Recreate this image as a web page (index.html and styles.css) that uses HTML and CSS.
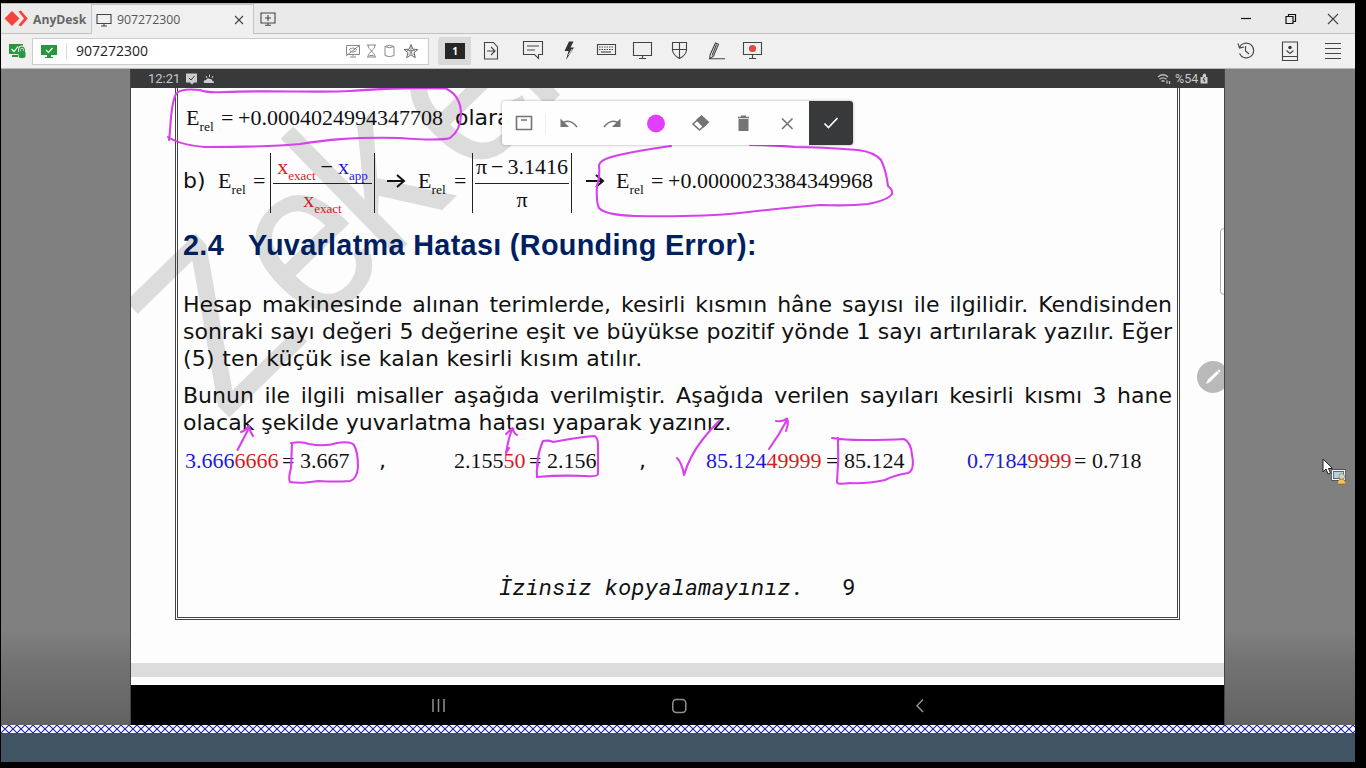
FILE: index.html
```html
<!DOCTYPE html>
<html lang="tr">
<head>
<meta charset="utf-8">
<title>AnyDesk</title>
<link rel="stylesheet" href="styles.css">
</head>
<body>
<div class="window">
  <header class="tabs">
    <div class="brand">
      <svg width="25" height="18" viewBox="0 0 25 18"><path d="M8 1l7.500 7.500L8 16 .5 8.500z" fill="#f4433a"/><path d="M14.500 1.500l2.300-1 7 8-7 8-2.300-1.500 5.500-6.500z" fill="#f4433a"/></svg>
      <b>AnyDesk</b>
    </div>
    <div class="tab">
      <svg width="16" height="14" viewBox="0 0 16 14"><path d="M1 1.500h14v9H1zM8 10.500v2.500M5 13h6" class="ln"/></svg>
      <span>907272300</span>
      <svg class="tabx" width="10" height="10" viewBox="0 0 10 10"><path d="M1 1l8 8M9 1l-8 8" class="ln"/></svg>
    </div>
    <svg class="newtab" width="16" height="14" viewBox="0 0 16 14"><path d="M1 1h14v10H1zM8 11v2M5 13.300h6M8 3v6M5 6h6" class="ln"/></svg>
    <div class="winbtns">
      <svg width="10" height="12" viewBox="0 0 10 12"><path d="M0 5.500h10" class="dk"/></svg>
      <svg width="12" height="12" viewBox="0 0 12 12"><path d="M1 3.500h7v7H1zM3.500 3.500v-2h7v7H8" class="dk"/></svg>
      <svg width="12" height="12" viewBox="0 0 12 12"><path d="M1 1l10 10M11 1L1 11" class="ln"/></svg>
    </div>
  </header>
  <div class="toolbar">
    <svg class="secure" width="18" height="16" viewBox="0 0 18 16"><path d="M0 1h14v10H0zM3 12h6v2H3z" fill="#2a973f"/><path d="M2.500 6L5 8.500 9 3.500" stroke="#fff" fill="none" stroke-width="1.200"/><path d="M10.500 9V6.500a2.400 2.400 0 0 1 5 0V9" fill="none" stroke="#f0f0f0" stroke-width="3"/><path d="M10.700 9V6.500a2.300 2.300 0 0 1 4.600 0V9" fill="none" stroke="#2a973f" stroke-width="1.300"/><rect x="9.500" y="8" width="7" height="7" rx="2.500" fill="#2a973f"/></svg>
    <div class="address">
      <svg width="18" height="15" viewBox="0 0 18 15"><path d="M1 1h16v10H1zM7 11h4v2h2v1H5v-1h2z" fill="#2a973f"/><path d="M6 6l2.500 2.500L12.500 4" stroke="#fff" fill="none" stroke-width="1.200"/></svg>
      <i class="bar"></i>
      <span>907272300</span>
      <svg class="addr-icons" width="76" height="18" viewBox="0 0 76 18" fill="none" stroke="#888">
        <path d="M1.500 3.500h13v9h-13zM8 12.500v2M5 15h6M1 14L15 3M4 8q4-4 8 0M5 9q3 2.500 6 0"/>
        <path d="M22 3h9M22 15h9M23 3c0 3 2 4 3.500 6C25 11 23 12 23 15M30 3c0 3-2 4-3.500 6C28 11 30 12 30 15M24.500 13.500h4"/>
        <path d="M40 4.500v9q4.500 2.500 9 0v-9M40 4.500q4.500-2.500 9 0q-4.500 2.500-9 0"/>
        <path d="M66 2.500l1.900 4.700 5 .3-3.900 3.200 1.300 4.900-4.300-2.700-4.300 2.700 1.300-4.900-3.900-3.200 5-.3z" stroke="#666"/><path d="M66 4v8M62 8.500h8M63.500 13l4-4M68.500 13l-4-4" stroke="#888"/>
      </svg>
    </div>
    <i class="sep"></i>
    <div class="one"><b>1</b></div>
    <svg class="tools" width="286" height="22" viewBox="0 0 286 22">
      <g class="ln">
        <path d="M1.500 2.500h9l4 4.500v12h-13zM4 11h8M8 7l4 4-4 4"/>
        <path d="M40.500 1.500h19v13h-4v4l-4-4h-11zM44 6h12M44 10h8"/>
        <path d="M114.500 4.500h18v10h-18z"/><path d="M116 7h15M116 9.500h15" stroke-dasharray="1.500 1"/><path d="M118 12h10"/>
        <path d="M150.500 2.500h18v13h-18zM159.500 15.500v3M156 18.500h7"/>
        <path d="M189.500 2.500h14v8q-1 5-7 8q-6-3-7-8zM196.500 2.500v16M189.500 9.500h14"/>
        <path d="M232.500 3l3 1.200-5 12-4 2.500.8-4.500zM233.500 4.500l-4.500 11M227 18.700h15"/>
        <path d="M260.500 2.500h18v12h-18zM269.500 14.500v4M266 18.500h7"/>
      </g>
      <path d="M86 1.500h4.500l-3 6H91L83 20l2.500-9h-4z" fill="#333"/><path d="M89 9L85.500 15" stroke="#eee" stroke-width=".9" fill="none"/>
      <circle cx="269.500" cy="8.500" r="3.600" fill="#e3473f"/>
    </svg>
    <svg class="right-tools" width="104" height="22" viewBox="0 0 104 22" fill="none">
      <g class="ln"><path d="M2.500 7.500a7.400 7.400 0 1 1 0 6M1 3.500l1.500 4.500 4.500-1M8.500 6v5l3.500 3"/>
      <path d="M45.500 2h15v18.500h-15zM45.500 16.500h15M49.500 10.500l3.500 3 3.500-3"/><path d="M88 3.500h16M88 8.500h16M88 13.500h16M88 18.500h16"/></g>
      <circle cx="53" cy="7.500" r="1.700" fill="#333"/>
    </svg>
  </div>
  <main class="remote">
    <div class="tablet">
      <div class="status">
        <span>12:21</span>
        <svg width="30" height="12" viewBox="0 0 30 12"><path d="M0 .5h11v9H8l-2 2-2-2H0z" fill="#ccc"/><path d="M3 5l2 2L8.500 3" stroke="#38393b" fill="none"/><path d="M18 10q-1-3 2-3q1.500-3 4-1q2-.5 2.500 2q2 .5 1.500 2z" fill="#ccc"/><path d="M20 3l1 2M23.500 1.500v2.500M27 3l-1 2" stroke="#ccc"/></svg>
        <svg class="wifi" width="14" height="12" viewBox="0 0 14 12" fill="none" stroke="#bbb" stroke-width="1.300"><path d="M1 4q5-4.500 10 0M2.500 6.300q3.500-3 7 0M4.500 8.500q1.500-1.500 3 0"/><path d="M10 7.500v3M12.500 8v3" /></svg>
        <span class="pct">%54</span>
        <svg width="8" height="11" viewBox="0 0 8 11"><path d="M1 4h1.500q0-3.500 2-3.500T6 4h1.500v6.500H.5V4z" fill="#ccc"/><path d="M4.500 4L3 7h2l-1 2" stroke="#444" fill="none"/></svg>
      </div>
      <div class="doc">
        <svg class="watermark" width="1093" height="597" viewBox="131 88 1093 597"><g transform="translate(228 419) rotate(-44.300) scale(.88 1)"><text x="-5 138 250 384 492">Zeker</text></g></svg>
        <article class="page">
          <div class="row first"><span>E<sub>rel</sub></span><span>=</span><span>+0.0004024994347708</span><span class="vd">olarak</span></div>
          <div class="row second">
            <span class="vd">b)</span><span>E<sub>rel</sub></span><span>=</span>
            <div class="frac f1"><div><span class="r">x<sub>exact</sub></span><span class="minus">−</span><span class="b">x<sub>app</sub></span></div><div><span class="r">x<sub>exact</sub></span></div></div>
            <svg class="arrow" width="20" height="16" viewBox="0 0 20 16"><path d="M1 8h17M11 2l7 6-7 6"/></svg>
            <span>E<sub>rel</sub></span><span>=</span>
            <div class="frac f2"><div>π<span class="minus">−</span>3.1416</div><div>π</div></div>
            <svg class="arrow" width="20" height="16" viewBox="0 0 20 16"><path d="M1 8h17M11 2l7 6-7 6"/></svg>
            <span>E<sub>rel</sub></span><span>=</span><span>+0.0000023384349968</span>
          </div>
          <h2><span>2.4</span><span>Yuvarlatma Hatası (Rounding Error):</span></h2>
          <p><span class="j">Hesap makinesinde alınan terimlerde, kesirli kısmın hâne sayısı ile ilgilidir. Kendisinden</span><span class="j">sonraki sayı değeri 5 değerine eşit ve büyükse pozitif yönde 1 sayı artırılarak yazılır. Eğer</span><span class="l">(5) ten küçük ise kalan kesirli kısım atılır.</span></p>
          <p><span class="j">Bunun ile ilgili misaller aşağıda verilmiştir. Aşağıda verilen sayıları kesirli kısmı 3 hane</span><span>olacak şekilde yuvarlatma hatası yaparak yazınız.</span></p>
          <div class="row nums">
            <span><span class="b">3.666</span><span class="r">6666</span></span><span>=</span><span>3.667</span><span class="vd">,</span>
            <span>2.155<span class="r">50</span></span><span>=</span><span>2.156</span><span class="vd">,</span>
            <span><span class="b">85.124</span><span class="r">49999</span></span><span>=</span><span>85.124</span>
            <span><span class="b">0.7184</span><span class="r">9999</span></span><span>=</span><span>0.718</span>
          </div>
          <footer><i>İzinsiz kopyalamayınız.</i><span>9</span></footer>
        </article>
        <div class="gap"></div>
        <svg class="ink" width="1093" height="597" viewBox="131 88 1093 597">
          <path d="M169 140C171 128 170 105 176 94Q180 88 200 90Q206 93 225 92C270 90 320 93 350 91Q400 87 446 88.500Q461 96 461 114Q461 130 450 138Q440 141 400 138C350 137 325 140 300 144Q270 147 205 147Q180 145 168 137"/>
          <path d="M671 146Q635 151 615 156Q599 160 599 166Q600 178 597 186Q596 202 599 208Q605 215 635 216Q700 217 740 213Q790 207 820 205Q850 206 868 204Q888 200 892 194Q893 190 888 186Q886 170 881 160Q874 152 858 150Q820 147 795 147Q775 145 750 145"/>
          <path d="M291 443Q302 441 309 444Q325 447 337 443Q350 441 354 445Q358 452 358 467Q357 479 350 481Q335 482 318 481Q300 484 290 482Q288 479 291 468L292 443"/>
          <path d="M237.500 450L249 428M241 432Q245 431 249 426Q250 432 253 436"/>
          <path d="M506 453Q508 440 512 429M506 434L512.500 428Q514 434 517 435M506 453L509 448"/>
          <path d="M537 467Q538 452 543 441Q549 440 553 442Q580 437 594 436Q598 437 598 445V474Q597 477 585 476Q560 475 537 477Q536 470 538 464"/>
          <path d="M677 458Q682 463 684 475Q690 455 703 439Q710 430 719 421"/>
          <path d="M769 449Q779 435 787 420M776 421Q783 422 787 418.500Q789 423 786 431"/>
          <path d="M832 438Q845 440 862 440Q890 440 904 439Q911 442 912 455Q915 470 908 473Q895 475 885 480Q865 484 850 483Q837 485 837 482Q839 460 838 438"/>
        </svg>
        <div class="palette">
          <svg width="305" height="44" viewBox="0 0 305 44" fill="none" stroke="#747474" stroke-width="1.600">
            <path d="M14.500 15.500h15v13h-15zM19 19h6"/><path d="M43.500 13v20" stroke="#eee" stroke-width="1"/>
            <path d="M60 22q8-5 15 4"/><path d="M58.500 17.500v8.500h8.500z" fill="#747474" stroke="none"/>
            <path d="M117 22q-8-5-15 4"/><path d="M118.500 17.500v8.500h-8.500z" fill="#747474" stroke="none"/>
            <circle cx="154" cy="22.500" r="9" fill="#e040fb" stroke="none"/>
            <path d="M191 23l8.500-7.500 6.500 6-8.500 7.500z"/><path d="M195 19l4.500-4 6.500 6-4.500 4.500z" fill="#747474"/>
            <path d="M236.500 18h10v12h-10zM239 14.500h5v1.500h3v1h-11v-1h3z" fill="#747474" stroke="none"/><path d="M236 16.500h11"/>
            <path d="M280 17.500l10.500 10.500M290.500 17.500L280 28"/>
          </svg>
          <div class="ok"><svg width="16" height="14" viewBox="0 0 16 14"><path d="M1.500 7.500l4 4L14.500 2" fill="none" stroke="#fff" stroke-width="1.700"/></svg></div>
        </div>
        <div class="handle"></div>
        <div class="pen"><svg width="18" height="18" viewBox="0 0 18 18"><path d="M2 16l2-4.500 9-8.500 2 2-9 9z" fill="#fff"/><path d="M13.500 2.500l1.500-1 1.500 1.500-1 1.500z" fill="#fff"/></svg></div>
      </div>
      <nav><svg width="1093" height="40" viewBox="131 685 1093 40" fill="none" stroke="#909090" stroke-width="1.500"><path d="M433 699v13M438.500 699v13M444 699v13"/><rect x="672.800" y="699.500" width="13" height="13" rx="3.500"/><path d="M923 699.500l-6 6.300 6 6.300"/></svg></nav>
    </div>
    <svg class="cursor" width="26" height="30" viewBox="0 0 26 30"><path d="M1 1v13l3-3 2 5 2.500-1-2-4.500h4z" fill="#fff" stroke="#222"/><path d="M10.500 12.500h12v9h-12z" fill="#b6cfe0" stroke="#444" stroke-width="2.500"/><path d="M10.500 12.500h12v9h-12z" stroke="#f5f5f5" fill="none" stroke-width="1.200"/><path d="M15 26q1-5 4.500-5t5 5z" fill="#f2c45c" stroke="#80642a" stroke-width=".7"/><circle cx="19.800" cy="18.500" r="2.800" fill="#ddd2b0" stroke="#777" stroke-width=".6"/></svg>
  </main>
  <svg class="hatch" width="1354" height="8"><defs><pattern id="x" width="8" height="8" patternUnits="userSpaceOnUse"><path d="M-1-1l10 10M9-1L-1 9" stroke="#2020a8" stroke-width="1.100"/></pattern></defs><rect width="1354" height="8" fill="#fff"/><rect width="1354" height="8" fill="url(#x)"/></svg>
  <div class="desk"></div>
</div>
</body>
</html>
```

FILE: styles.css
```css
* { box-sizing: border-box; }
body { margin: 0; background: #000; width: 1366px; height: 768px; overflow: hidden; padding: 3px 11px 6px 1px; }
svg { display: block; flex: none; }
.window { width: 1354px; height: 759px; display: flex; flex-direction: column; font-family: "Open Sans", "Noto Sans", sans-serif; }
.ln { fill: none; stroke: #444; stroke-width: 1.1; }
.dk { fill: none; stroke: #111; stroke-width: 1.2; }
.tabs { height: 31px; background: #eaeaea; border-top: 1px solid #bbb; border-bottom: 1px solid #c0c0c0; display: flex; align-items: center; }
.brand { width: 90px; display: flex; align-items: center; gap: 4px; padding: 1px 0 0 3px; color: #666; font-size: 12.2px; }
.tab { width: 163px; height: 30px; margin-top: 1px; background: #f0f0f0; border: 1px solid #c6c6c6; border-bottom: 0; display: flex; align-items: center; padding: 0 9px 0 4px; color: #555; font-size: 12.3px; }
.tab span { margin-left: 5px; }
.tabx { margin-left: auto; }
.newtab { margin-left: 6px; }
.winbtns { margin-left: auto; display: flex; gap: 34px; padding-right: 16px; align-items: center; }
.winbtns svg:nth-child(2) { margin: 0 -4px 0 1px; }
.winbtns svg:nth-child(1) { margin-right: -1px; }
.toolbar { height: 35px; background: #f0f0f0; border-bottom: 1px solid #bbb; display: flex; align-items: center; flex: none; }
.secure { margin-left: 8px; }
.address { margin-left: 5px; width: 397px; height: 27px; background: #fff; border: 1px solid #ccc; display: flex; align-items: center; padding-left: 7px; color: #222; font-size: 14px; }
.address span { margin-bottom: 1px; }
.bar { width: 1px; height: 16px; background: #ddd; margin: 0 9px 0 8px; }
.addr-icons { margin: 0 7px 0 auto; }
.sep { width: 1px; height: 25px; background: #ddd; margin-left: 9px; }
.one { width: 32px; height: 28px; background: #d9d9d9; display: grid; place-items: center; }
.one b { width: 20px; height: 16px; background: #262626; color: #fff; font-size: 10px; line-height: 16px; text-align: center; }
.tools { margin-left: 12px; }
.right-tools { margin: 0 14px 0 auto; }
.remote { height: 656px; flex: none; padding-left: 129px; background: linear-gradient(#808080 0 561px, #747474 590px, #626262); position: relative; }
.tablet { width: 1095px; height: 656px; border: solid #444; border-width: 0 1px; display: flex; flex-direction: column; }
.status { height: 19px; background: #38393b; color: #c8c8c8; font: 13px/19px Roboto, sans-serif; display: flex; align-items: center; padding: 0 16px 0 17px; }
.status span:first-child { width: 38px; }
.wifi { margin-left: auto; margin-right: 4px; }
.pct { width: 25px; font-size: 12.5px; }
.doc { height: 597px; background: #fdfdfd; position: relative; overflow: hidden; }
.watermark, .ink { position: absolute; left: 0; top: 0; }
.watermark { font: 226px "Liberation Sans", sans-serif; fill: #dcdcdc; }
.ink { fill: none; stroke: #d83fee; stroke-width: 2.1; stroke-linejoin: round; stroke-linecap: round; }
.page { position: relative; width: 1005px; height: 532px; margin-left: 44px; border: 3px double #444; border-top: 0; padding: 0 5px; color: #111; }
.row { display: grid; font: 22px/28px "Liberation Serif", serif; white-space: nowrap; align-items: center; align-content: center; }
sub { font-size: 13.5px; line-height: 0; vertical-align: -6px; }
.vd { font-family: "DejaVu Sans", sans-serif; }
.r { color: #d81b20; }
.b { color: #1a1ad8; }
.first { grid-template-columns: 35px 17px 217px auto; height: 58px; padding: 2px 0 0 3px; }
.second { grid-template-columns: 35px 35px 17px 116px 32px 36px 18px 113px 31px 35px 17px auto; height: 73px; padding-top: 1px; }
.second > span, .second > svg { margin-bottom: 4px; }
.frac { border: solid #222; border-width: 0 1px; padding: 0 2px; height: 60px; text-align: center; }
.frac > div { height: 30px; line-height: 28px; }
.frac > div + div { border-top: 1px solid #222; line-height: 32px; }
.f1 { width: 105px; }
.f2 { width: 100px; }
.f1 sub { font-size: 13px; }
.minus { margin: 0 4px; }
.f1 .minus { margin: 0 5px; }
.arrow { fill: none; stroke: #111; stroke-width: 2; }
h2 { margin: 0; height: 72px; padding-top: 8px; display: flex; font: bold 28.8px/36px "Liberation Sans", sans-serif; color: #001f5f; white-space: nowrap; letter-spacing: .32px; }
h2 span:first-child { width: 65px; }
p { margin: 0 0 10px; font: 22px/27px "DejaVu Sans", sans-serif; }
p span { display: block; height: 27px; white-space: nowrap; }
p .j { text-align: justify; text-align-last: justify; white-space: normal; }
p .l { letter-spacing: .25px; }
.nums { grid-template-columns: 97px 18px 79px 75px 75px 18px 92px 67px 120px 18px 123px 107px 18px auto; height: 28px; margin-top: 11px; padding-left: 2px; }
footer { margin-top: 96px; display: flex; font: 22.6px/30px "Roboto Mono", "Liberation Mono", monospace; padding-left: 316px; color: #111; }
footer i { width: 343px; white-space: nowrap; }
.gap { margin-top: 43px; height: 14px; background: #dcdcdc; position: relative; }
.palette { position: absolute; left: 371px; top: 13px; width: 351px; height: 44px; background: #fefefe; border-radius: 3px; box-shadow: 0 0 3px #0005; display: flex; overflow: hidden; }
.ok { margin-left: auto; width: 44px; background: #38393b; display: grid; place-items: center; }
.handle { position: absolute; left: 1089px; top: 140px; width: 12px; height: 67px; border: 1px solid #aaa; border-radius: 4px; background: #fff; }
.pen { position: absolute; left: 1066px; top: 273px; width: 32px; height: 32px; border-radius: 50%; background: #b9b9b9; display: grid; place-items: center; }
nav { height: 40px; background: #000; }
.cursor { position: absolute; left: 1321px; top: 389px; }
.hatch { flex: none; }
.desk { flex: 1; background: #415463; }
```
